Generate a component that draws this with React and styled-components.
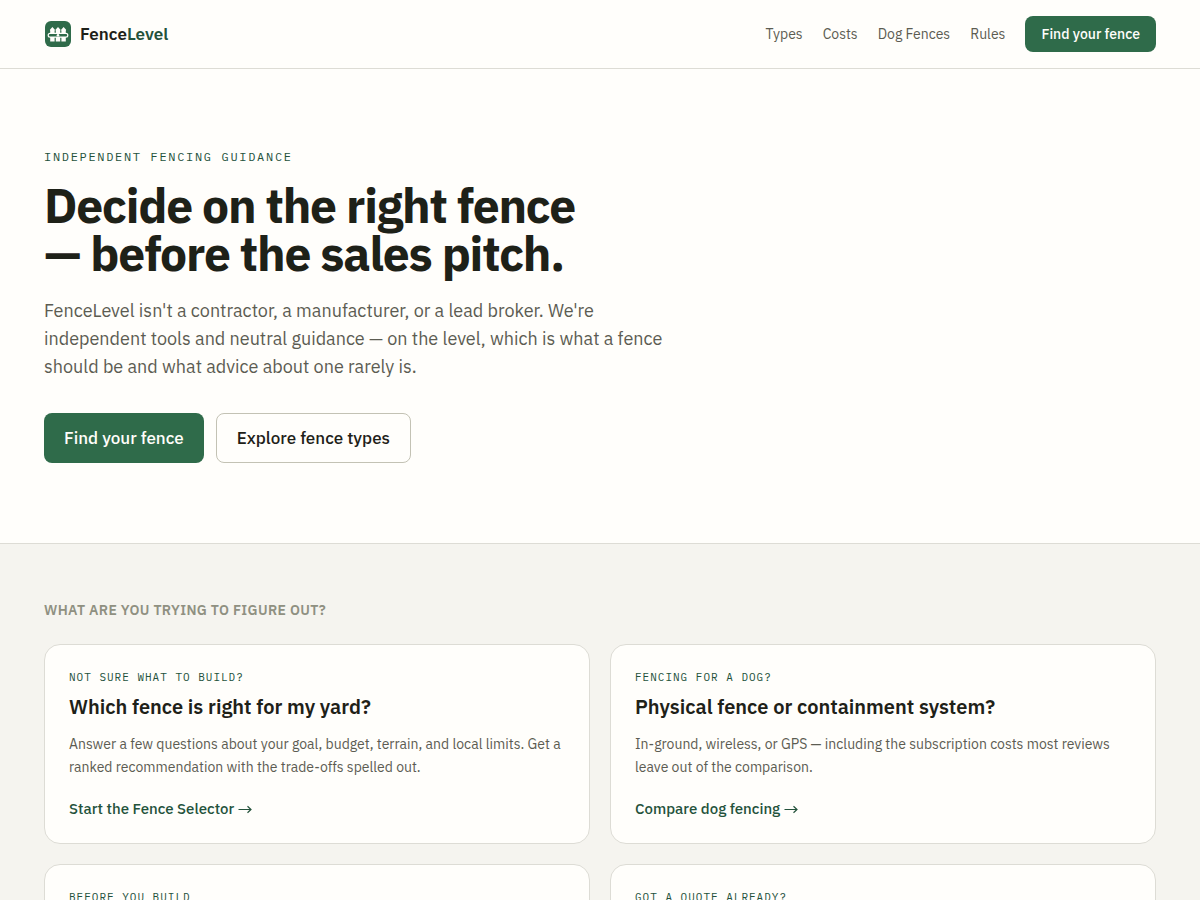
import React from 'react';
import styled, { createGlobalStyle, css } from 'styled-components';

const color = {
  paper: '#fffefb',
  tint: '#f5f4ef',
  line: '#dddcd5',
  lineStrong: '#c3c2b4',
  ink: '#1e2118',
  body: '#5c5c52',
  muted: '#8f9081',
  green: '#2f6b4a',
  greenDark: '#24523b',
};

const GlobalStyle = createGlobalStyle`
  *, *::before, *::after { box-sizing: border-box; }
  body {
    margin: 0;
    background: ${color.paper};
    color: ${color.ink};
    font-family: 'IBM Plex Sans', Roboto, 'Liberation Sans', sans-serif;
    font-size: 16px;
    line-height: 24px;
  }
  h1, h2, h3, p { margin: 0; }
  a { color: inherit; text-decoration: none; }
  button { font-family: inherit; cursor: pointer; }
`;

const Container = styled.div`
  max-width: 1200px;
  margin: 0 auto;
  padding: 0 44px;
`;

const Header = styled.header`
  border-bottom: 1px solid ${color.line};
`;

const HeaderRow = styled(Container)`
  display: flex;
  align-items: center;
  justify-content: space-between;
  min-height: 68px;
`;

const Brand = styled.a`
  display: flex;
  align-items: center;
  gap: 8px;
  font-size: 17px;
  font-weight: 600;
`;

const BrandAccent = styled.span`
  color: ${color.greenDark};
`;

const Nav = styled.nav`
  display: flex;
  align-items: center;
  gap: 20px;
`;

const NavLink = styled.a`
  font-size: 14px;
  line-height: 20px;
  color: ${color.body};
`;

const Button = styled.button`
  border: 0;
  border-radius: 8px;
  background: ${color.green};
  color: ${color.paper};
  font-weight: 500;
  font-size: 17px;
  line-height: 24px;
  padding: 12px 20px;

  ${(p) => p.$small && css`
    font-size: 14px;
    line-height: 20px;
    padding: 8px 16px;
  `}

  ${(p) => p.$outline && css`
    border: 1px solid ${color.lineStrong};
    background: transparent;
    color: ${color.ink};
  `}
`;

const Hero = styled.section`
  padding: 80px 0;
  border-bottom: 1px solid ${color.line};
`;

const Eyebrow = styled.p`
  font-family: 'IBM Plex Mono', 'Liberation Mono', monospace;
  font-size: 12px;
  line-height: 16px;
  letter-spacing: 0.14em;
  text-transform: uppercase;
  color: ${color.greenDark};
`;

const HeroTitle = styled.h1`
  max-width: 640px;
  margin-top: 16px;
  font-size: 48px;
  line-height: 48px;
  font-weight: 700;
  letter-spacing: -0.025em;
`;

const Lead = styled.p`
  max-width: 640px;
  margin-top: 20px;
  font-size: 18px;
  line-height: 28px;
  color: ${color.body};
`;

const Actions = styled.div`
  display: flex;
  gap: 12px;
  margin-top: 32px;
`;

const Questions = styled.section`
  padding: 56px 0;
  background: ${color.tint};
`;

const SectionTitle = styled.h2`
  font-size: 14px;
  line-height: 20px;
  font-weight: 600;
  letter-spacing: 0.025em;
  text-transform: uppercase;
  color: ${color.muted};
`;

const CardGrid = styled.div`
  display: grid;
  grid-template-columns: 1fr 1fr;
  gap: 20px;
  margin-top: 24px;
`;

const Card = styled.article`
  min-height: 200px;
  padding: 24px;
  border: 1px solid ${color.line};
  border-radius: 16px;
  background: ${color.paper};
`;

const CardLabel = styled.p`
  font-family: 'IBM Plex Mono', 'Liberation Mono', monospace;
  font-size: 11px;
  line-height: 16px;
  letter-spacing: 1px;
  text-transform: uppercase;
  color: ${color.greenDark};
`;

const CardTitle = styled.h3`
  margin-top: 8px;
  font-size: 20px;
  line-height: 28px;
  font-weight: 600;
`;

const CardText = styled.p`
  margin-top: 12px;
  font-size: 14px;
  line-height: 23px;
  color: ${color.body};
`;

const CardLink = styled.a`
  display: flex;
  align-items: center;
  gap: 4px;
  margin-top: 20px;
  font-size: 15px;
  line-height: 20px;
  font-weight: 500;
  color: ${color.greenDark};
`;

const Logo = () => (
  <svg width="28" height="28" viewBox="0 0 28 28" aria-hidden="true">
    <rect x="1" y="1" width="26" height="26" rx="6" fill={color.green} />
    <g fill={color.paper}>
      <path d="M6.2 21.6V11L5.9 9.8 8.4 6.9l2.5 2.9-.3 1.2v10.6z" />
      <path d="M11.8 21.6V11l-.3-1.2L14 6.9l2.5 2.9-.3 1.2v10.6z" />
      <path d="M17.4 21.6V11l-.3-1.2 2.5-2.9 2.5 2.9-.3 1.2v10.6z" />
    </g>
    <rect x="4.2" y="13.3" width="19.6" height="3.8" rx="1.9" fill={color.green} stroke={color.paper} strokeWidth="1.2" />
    <circle cx="14" cy="15.2" r="1.3" fill={color.paper} />
  </svg>
);

const Arrow = () => (
  <svg width="14" height="10" viewBox="0 0 14 10" fill="none" stroke="currentColor" strokeWidth="1.2" aria-hidden="true">
    <path d="M0.5 5.5H13M9.5 2.2L13 5.5L9.5 8.8" />
  </svg>
);

const links = ['Types', 'Costs', 'Dog Fences', 'Rules'];

const cards = [
  {
    label: 'Not sure what to build?',
    title: 'Which fence is right for my yard?',
    text: 'Answer a few questions about your goal, budget, terrain, and local limits. Get a ranked recommendation with the trade-offs spelled out.',
    link: 'Start the Fence Selector',
  },
  {
    label: 'Fencing for a dog?',
    title: 'Physical fence or containment system?',
    text: 'In-ground, wireless, or GPS — including the subscription costs most reviews leave out of the comparison.',
    link: 'Compare dog fencing',
  },
  { label: 'Before you build' },
  { label: 'Got a quote already?' },
];

export default function App() {
  return (
    <>
      <GlobalStyle />
      <Header>
        <HeaderRow>
          <Brand href="#">
            <Logo />
            <span>Fence<BrandAccent>Level</BrandAccent></span>
          </Brand>
          <Nav>
            {links.map((name) => <NavLink key={name} href="#">{name}</NavLink>)}
            <Button $small>Find your fence</Button>
          </Nav>
        </HeaderRow>
      </Header>
      <main>
        <Hero>
          <Container>
            <Eyebrow>Independent fencing guidance</Eyebrow>
            <HeroTitle>Decide on the right fence<br />— before the sales pitch.</HeroTitle>
            <Lead>
              FenceLevel isn't a contractor, a manufacturer, or a lead broker. We're
              independent tools and neutral guidance — on the level, which is what a fence
              should be and what advice about one rarely is.
            </Lead>
            <Actions>
              <Button>Find your fence</Button>
              <Button $outline>Explore fence types</Button>
            </Actions>
          </Container>
        </Hero>
        <Questions>
          <Container>
            <SectionTitle>What are you trying to figure out?</SectionTitle>
            <CardGrid>
              {cards.map((card) => (
                <Card key={card.label}>
                  <CardLabel>{card.label}</CardLabel>
                  {card.title && <CardTitle>{card.title}</CardTitle>}
                  {card.text && <CardText>{card.text}</CardText>}
                  {card.link && <CardLink href="#">{card.link}<Arrow /></CardLink>}
                </Card>
              ))}
            </CardGrid>
          </Container>
        </Questions>
      </main>
    </>
  );
}
